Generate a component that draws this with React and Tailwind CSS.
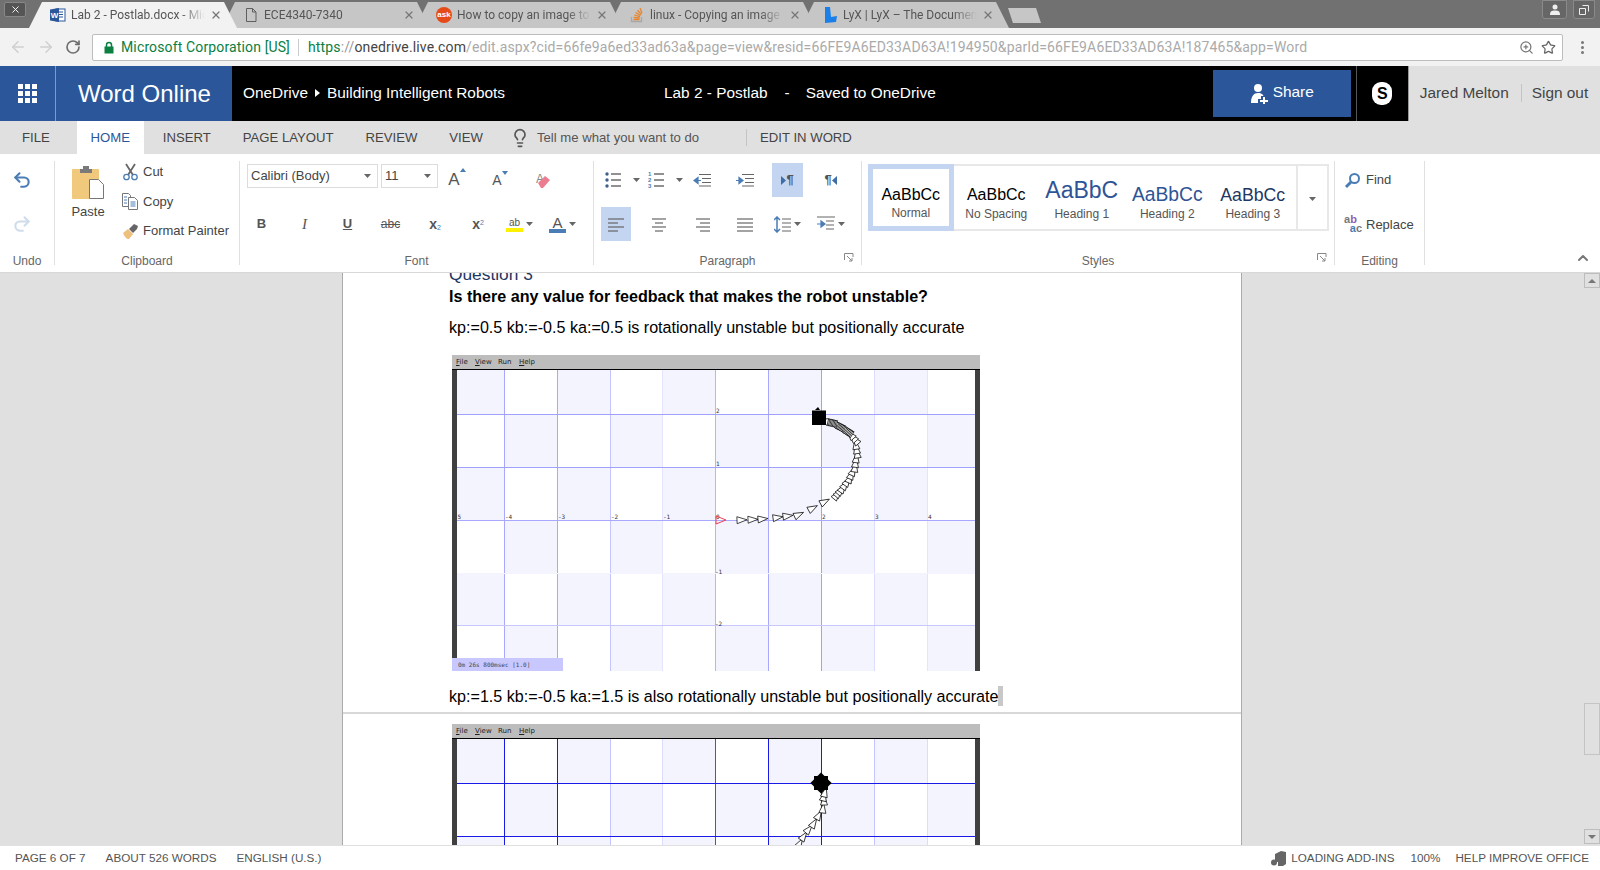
import React from 'react';
import { ArrowLeft, ArrowRight, RotateCw, ZoomIn, Star, Undo2, Redo2, Lightbulb, ChevronUp, X } from 'lucide-react';

const tabs = [
  { title: 'Lab 2 - Postlab.docx - Microsoft Word', icon: 'word', active: true },
  { title: 'ECE4340-7340', icon: 'doc' },
  { title: 'How to copy an image to the clipboard', icon: 'ask' },
  { title: 'linux - Copying an image to clipboard', icon: 'so' },
  { title: 'LyX | LyX – The Document Processor', icon: 'lyx' },
];

const Caret = ({ className = '' }) => (
  <svg width="7" height="4" viewBox="0 0 7 4" className={className}><path d="M0 0h7L3.500 4z" fill="#666" /></svg>
);

const Favicon = ({ type }) => {
  if (type === 'word') return (
    <svg width="16" height="16" viewBox="0 0 16 16">
      <rect x="6" y="2" width="9" height="12" fill="#fff" stroke="#2b579a" />
      <path d="M9 5h4M9 7.500h4M9 10h4" stroke="#2b579a" />
      <path d="M0 2.500 9 1v14l-9-1.500z" fill="#2b579a" />
      <text x="4.500" y="11" textAnchor="middle" fontSize="8" fontWeight="700" fill="#fff" fontFamily="Liberation Sans">W</text>
    </svg>
  );
  if (type === 'doc') return (
    <svg width="16" height="16" viewBox="0 0 16 16" fill="none" stroke="#5f5f5f">
      <path d="M3.500 1.500h6l3.500 3.500v9.500h-9.500zM9.500 1.500v3.500h3.500" />
    </svg>
  );
  if (type === 'ask') return (
    <div className="w-[16px] h-[16px] rounded-full bg-[#e64a19] text-white text-[8px] font-bold leading-[15px] text-center">ask</div>
  );
  if (type === 'so') return (
    <svg width="16" height="16" viewBox="0 0 16 16" fill="none" stroke="#e8842c" strokeWidth="1.300">
      <path d="M2.500 10v4.500h10V10" stroke="#a8a8a8" />
      <path d="M4.500 12.500h6M4.700 10.300l5.900.7M5.300 8l5.700 1.700M6.600 5.500l5 3M8.500 3.200l4 4.300M11 1l2 5" />
    </svg>
  );
  return (
    <svg width="16" height="18" viewBox="0 0 16 18"><path d="M3 1h5l1 10 6-1-1 6-11 1z" fill="#1a7fe8" /></svg>
  );
};

const ChromeTab = ({ tab }) => (
  <div className={`relative w-[208px] h-[26px] -mr-[15px] flex items-center pl-[21px] pr-[15px] [clip-path:polygon(0_100%,13px_0,195px_0,100%_100%)] ${tab.active ? 'bg-[#f2f2f2] z-10' : 'bg-[#c6c6c6]'}`}>
    <div className="w-[16px] flex justify-center shrink-0"><Favicon type={tab.icon} /></div>
    <div className="ml-[5px] flex-1 overflow-hidden whitespace-nowrap text-[12px] text-[#555] [font-family:Roboto,sans-serif] [mask-image:linear-gradient(to_right,black_82%,transparent)]">{tab.title}</div>
    <X size={12} strokeWidth={2.500} className="ml-[5px] shrink-0 text-[#777]" />
  </div>
);

const TabStrip = () => (
  <div className="h-[28px] bg-[#717171] flex items-end">
    <div className="self-start mt-[2px] ml-[4px] w-[22px] h-[15px] bg-[#555] border border-[#888] rounded-[2px] flex items-center justify-center">
      <X size={11} strokeWidth={2} className="text-white" />
    </div>
    <div className="ml-[3px] flex">
      {tabs.map(t => <ChromeTab key={t.title} tab={t} />)}
    </div>
    <div className="ml-[14px] mb-[5px] w-[33px] h-[15px] bg-[#c6c6c6] [clip-path:polygon(0_0,85%_0,100%_100%,15%_100%)]" />
    <div className="ml-auto self-start flex gap-[6px] mr-[5px]">
      <div className="w-[25px] h-[19px] bg-[#666] border border-[#8a8a8a] rounded-b-[3px] flex items-center justify-center">
        <svg width="10" height="11" viewBox="0 0 10 11" fill="#eee"><circle cx="5" cy="3" r="2.500" /><path d="M0 11c0-4 2-4.500 5-4.500s5 .5 5 4.500z" /></svg>
      </div>
      <div className="w-[22px] h-[19px] bg-[#666] border border-[#8a8a8a] rounded-b-[3px] flex items-center justify-center">
        <svg width="10" height="10" viewBox="0 0 10 10" fill="none" stroke="#eee"><path d="M3.500.5h6v6M.5 3.500h6v6h-6z" /></svg>
      </div>
    </div>
  </div>
);

const AddressBar = () => (
  <div className="h-[38px] bg-[#f2f2f2] flex items-center [font-family:Roboto,sans-serif]">
    <div className="w-[92px] flex items-center pl-[9px] gap-[10px] shrink-0">
      <ArrowLeft size={18} className="text-[#cfcfcf]" />
      <ArrowRight size={18} className="text-[#cfcfcf]" />
      <RotateCw size={16} strokeWidth={2.500} className="text-[#6e6e6e]" />
    </div>
    <div className="w-[1471px] h-[27px] bg-white border border-[#bdbdbd] rounded-[2px] flex items-center text-[14px] tracking-[0.14px] whitespace-nowrap">
      <svg width="10" height="13" viewBox="0 0 10 13" className="ml-[11px]">
        <path d="M2.500 6V4a2.500 2.500 0 0 1 5 0v2" fill="none" stroke="#0b8043" strokeWidth="1.500" />
        <rect x="0.500" y="5.500" width="9" height="7" fill="#0b8043" />
      </svg>
      <span className="ml-[7px] text-[#0b8043]">Microsoft Corporation [US]</span>
      <div className="ml-[8px] w-px h-[17px] bg-[#ccc]" />
      <span className="ml-[9px] text-[#0b8043]">https</span>
      <span className="text-[#999]">://</span>
      <span className="text-[#444]">onedrive.live.com</span>
      <span className="text-[#aaa]">/edit.aspx?cid=66fe9a6ed33ad63a&amp;page=view&amp;resid=66FE9A6ED33AD63A!194950&amp;parId=66FE9A6ED33AD63A!187465&amp;app=Word</span>
      <ZoomIn size={15} className="ml-auto text-[#777]" />
      <Star size={15} className="ml-[7px] mr-[6px] text-[#666]" />
    </div>
    <div className="flex-1 flex flex-col items-center gap-[2px] pl-[2px]">
      <div className="w-[3px] h-[3px] rounded-full bg-[#777]" />
      <div className="w-[3px] h-[3px] rounded-full bg-[#777]" />
      <div className="w-[3px] h-[3px] rounded-full bg-[#777]" />
    </div>
  </div>
);

const Waffle = () => (
  <div className="grid grid-cols-3 gap-[2px]">
    {Array.from({ length: 9 }).map((_, i) => <div key={i} className="w-[5px] h-[5px] bg-white" />)}
  </div>
);

const WordHeader = () => (
  <div className="h-[55px] bg-black flex text-white text-[15.400px]">
    <div className="w-[56px] bg-[#2b579a] border-r border-[#7f9ac4] flex items-center justify-center"><Waffle /></div>
    <div className="w-[176px] bg-[#2b579a] pl-[22px] flex items-center text-[24px]">Word Online</div>
    <div className="w-[432px] pl-[11px] pb-[1px] flex items-center">
      <span>OneDrive</span>
      <svg width="5" height="8" viewBox="0 0 5 8" className="mx-[7px]"><path d="M0 0l5 4-5 4z" fill="#fff" /></svg>
      <span>Building Intelligent Robots</span>
    </div>
    <div className="flex items-center whitespace-pre pb-[1px]">
      <span>Lab 2 - Postlab</span>
      <span className="ml-[17px]">-</span>
      <span className="ml-[16px]">Saved to OneDrive</span>
    </div>
    <div className="ml-[277px] my-[4px] w-[138px] bg-[#2b579a] flex items-center justify-center gap-[4px]">
      <svg width="19" height="21" viewBox="0 0 19 21" fill="#fff">
        <circle cx="8" cy="5" r="4" />
        <path d="M1 20c0-7 3-10 7-10s5 2 5.500 3H11v3H8v4z" />
        <path d="M13 14h2v3h3v2h-3v2h-2v-2h-3v-2h3z" />
      </svg>
      <span className="-mt-[3px]">Share</span>
    </div>
    <div className="ml-[5px] w-px bg-[#555]" />
    <div className="w-[51px] flex items-center justify-center">
      <div className="w-[20px] h-[23px] rounded-[9px] bg-white text-black text-[16px] font-bold flex items-center justify-center">S</div>
    </div>
    <div className="flex-1 bg-[#e0e0e0] text-[#444] flex items-center border-l border-[#999] pb-[1px]">
      <span className="ml-[11px]">Jared Melton</span>
      <div className="ml-[12px] w-px h-[18px] bg-[#c4c4c4]" />
      <span className="ml-[10px]">Sign out</span>
    </div>
  </div>
);

const RibbonTabs = () => (
  <div className="h-[33px] bg-[#e0e0e0] flex items-center text-[13.150px] text-[#444]">
    <span className="ml-[22px]">FILE</span>
    <span className="ml-[27px] h-full w-[67px] bg-white text-[#2b579a] flex items-center justify-center">HOME</span>
    <span className="ml-[19px]">INSERT</span>
    <span className="ml-[32px]">PAGE LAYOUT</span>
    <span className="ml-[32px]">REVIEW</span>
    <span className="ml-[32px]">VIEW</span>
    <Lightbulb size={20} className="ml-[27px] text-[#555]" />
    <span className="ml-[7px] text-[#555]">Tell me what you want to do</span>
    <div className="ml-[47px] w-px h-[17px] bg-[#c4c4c4]" />
    <span className="ml-[13px]">EDIT IN WORD</span>
  </div>
);

const Launcher = () => (
  <svg width="10" height="10" viewBox="0 0 10 10" fill="none" stroke="#888" className="absolute right-[7px] bottom-[2px]">
    <path d="M.5 7V.5H9V4M3 3l5 5M8 5v3H5" />
  </svg>
);

const Group = ({ label, w, launcher, children }) => (
  <div className={`relative h-[104px] flex flex-col justify-between border-r border-[#e0e0e0] ${w}`}>
    <div>{children}</div>
    <div className="h-[16px] -mb-[4px] text-center text-[12px] leading-[16px] text-[#666]">{label}</div>
    {launcher && <Launcher />}
  </div>
);

const Scissors = () => (
  <svg width="17" height="18" viewBox="0 0 17 18" fill="none">
    <path d="M4 1l7 11M13 1L6 12" stroke="#666" strokeWidth="1.800" />
    <circle cx="4.500" cy="14" r="2.700" stroke="#4a7db5" strokeWidth="1.300" />
    <circle cx="12.500" cy="14" r="2.700" stroke="#4a7db5" strokeWidth="1.300" />
  </svg>
);

const CopyIcon = () => (
  <svg width="17" height="17" viewBox="0 0 17 17" fill="#fff" stroke="#777">
    <path d="M.5.500h6l2 2v11h-8z" />
    <path d="M6.500 4.500h6l3 3v9h-9z" />
    <path d="M2 4h3M2 7h3M2 10h3M8.500 9h5M8.500 11h5M8.500 13h5" stroke="#4a7db5" />
  </svg>
);

const PainterIcon = () => (
  <svg width="17" height="17" viewBox="0 0 17 17">
    <path d="M1 10l5-4 5 5-4 5c-3 0-4-2-6-6z" fill="#edc07c" />
    <path d="M7 6l5-5 4 2-1 3-4 4z" fill="#666" />
  </svg>
);

const PasteIcon = () => (
  <svg width="32" height="34" viewBox="0 0 32 34">
    <rect x="0" y="4" width="27" height="30" rx="1" fill="#f0c97c" />
    <path d="M8 4h3V1h6v3h3v4H8z" fill="#7a7a7a" />
    <path d="M17.500 14.500h9l5 5v14h-14z" fill="#fff" stroke="#777" />
  </svg>
);

const ClipRow = ({ icon, text }) => (
  <div className="h-[22px] flex items-center text-[13px] text-[#444]">
    <div className="w-[18px] flex justify-center">{icon}</div>
    <span className="ml-[4px]">{text}</span>
  </div>
);

const Cell = ({ children, w = 'w-[43px]', start }) => (
  <div className={`${w} h-full flex items-center shrink-0 ${start ? 'justify-start pl-[11px]' : 'justify-center'}`}>{children}</div>
);

const GrowA = ({ size, up }) => (
  <div className="relative flex text-[#555]">
    <span className={size}>A</span>
    <svg width="6" height="4" viewBox="0 0 6 4" className="mt-[1px]">
      <path d={up ? 'M0 4h6L3 0z' : 'M0 0h6L3 4z'} fill="#4a7db5" />
    </svg>
  </div>
);

const Eraser = () => (
  <svg width="17" height="17" viewBox="0 0 17 17">
    <text x="1" y="11" fontSize="12" fill="#888" fontFamily="Liberation Sans">A</text>
    <path d="M3 11l7-7 5 4-7 8H6z" fill="#ec7d8f" />
  </svg>
);

const FontRow1 = () => (
  <div className="h-[38px] flex items-center pl-[7px] text-[13px] text-[#444]">
    <div className="w-[131px] h-[24px] mb-[8px] border border-[#dcdcdc] flex items-center justify-between pl-[3px] pr-[6px]">
      <span>Calibri (Body)</span><Caret />
    </div>
    <div className="ml-[3px] w-[57px] h-[24px] mb-[8px] border border-[#dcdcdc] flex items-center justify-between pl-[3px] pr-[6px]">
      <span>11</span><Caret />
    </div>
    <div className="ml-[2px] flex h-full gap-[9px] items-center">
      <Cell w="w-[34px]"><GrowA size="text-[17px]" up /></Cell>
      <Cell w="w-[34px]"><GrowA size="text-[14px]" /></Cell>
      <Cell w="w-[34px]"><Eraser /></Cell>
    </div>
  </div>
);

const FontRow2 = () => (
  <div className="h-[38px] mt-[6px] flex text-[#555] text-[13px]">
    <Cell><span className="font-bold">B</span></Cell>
    <Cell><span className="italic [font-family:'Liberation_Serif',serif] text-[15px]">I</span></Cell>
    <Cell><span className="underline font-bold">U</span></Cell>
    <Cell><span className="line-through text-[12px]">abc</span></Cell>
    <Cell><span className="ml-[3px] font-bold text-[14px]">x<sub className="text-[7px] font-normal text-[#4a7db5]">2</sub></span></Cell>
    <Cell><span className="ml-[3px] font-bold text-[14px]">x<sup className="text-[7px] font-normal text-[#4a7db5]">2</sup></span></Cell>
    <Cell>
      <div className="flex items-center gap-[3px]">
        <div className="flex flex-col items-center">
          <span className="text-[10px] leading-[11px]">ab</span>
          <div className="w-[17px] h-[4px] bg-[#fff200]" />
        </div>
        <Caret />
      </div>
    </Cell>
    <Cell>
      <div className="flex items-center gap-[3px]">
        <div className="flex flex-col items-center">
          <span className="text-[15px] leading-[13px]">A</span>
          <div className="w-[17px] h-[4px] bg-[#4a7db5]" />
        </div>
        <Caret />
      </div>
    </Cell>
  </div>
);

const Lines = ({ kind }) => {
  const rows = [3, 7, 11, 15];
  const spec = {
    center: [[1, 15], [4, 12], [1, 15], [4, 12]],
    right: [[2, 16], [6, 16], [2, 16], [6, 16]],
  };
  return (
    <svg width="16" height="16" viewBox="0 0 16 16" stroke="#666" strokeWidth="1.200">
      {rows.map((y, i) => {
        if (kind === 'left') return <path key={y} d={`M0 ${y}h${i % 2 ? 10 : 16}`} />;
        const s = kind === 'justify' ? [0, 16] : spec[kind][i];
        return <path key={y} d={`M${s[0]} ${y}H${s[1]}`} />;
      })}
    </svg>
  );
};

const Bullets = ({ numbered }) => (
  <svg width="16" height="16" viewBox="0 0 16 16">
    {[2, 8, 14].map((y, i) => (
      <g key={y}>
        {numbered
          ? <text x="0" y={y + 2} fontSize="6" fontWeight="700" fill="#4a7db5" fontFamily="Liberation Sans">{i + 1}</text>
          : <circle cx="2" cy={y} r="1.700" fill="#3d5f88" />}
        <path d={`M6 ${y}h10`} stroke="#555" strokeWidth="1.300" />
      </g>
    ))}
  </svg>
);

const IndentIcon = ({ flip }) => (
  <svg width="18" height="14" viewBox="0 0 18 14" stroke="#666" strokeWidth="1.200">
    <path d="M6 1.500h12M9 5.500h9M9 9.500h9M6 13h12" />
    {flip
      ? <path d="M0 7.500h6M3 4.500l4 3-4 3z" stroke="#4a7db5" fill="#4a7db5" />
      : <path d="M8 7.500H2M5 4.500l-4 3 4 3z" stroke="#4a7db5" fill="#4a7db5" />}
  </svg>
);

const DirIcon = ({ rtl }) => (
  <div className="flex items-center text-[13px] text-[#555] font-bold">
    {!rtl && <svg width="5" height="9" viewBox="0 0 5 9"><path d="M0 0l5 4.500L0 9z" fill="#3d6ea5" /></svg>}
    <span>¶</span>
    {rtl && <svg width="5" height="9" viewBox="0 0 5 9"><path d="M5 0L0 4.500 5 9z" fill="#3d6ea5" /></svg>}
  </div>
);

const ParagraphRows = () => (
  <>
    <div className="h-[38px] flex">
      <Cell start><div className="flex items-center gap-[12px]"><Bullets /><Caret /></div></Cell>
      <Cell start><div className="flex items-center gap-[12px]"><Bullets numbered /><Caret /></div></Cell>
      <Cell><IndentIcon /></Cell>
      <Cell><IndentIcon flip /></Cell>
      <Cell><div className="w-[31px] h-[34px] bg-[#c3d5f1] flex items-center justify-center"><DirIcon /></div></Cell>
      <Cell><DirIcon rtl /></Cell>
    </div>
    <div className="h-[38px] mt-[6px] flex">
      <Cell><div className="w-[30px] h-[34px] bg-[#c3d5f1] flex items-center justify-center"><Lines kind="left" /></div></Cell>
      <Cell><Lines kind="center" /></Cell>
      <Cell><Lines kind="right" /></Cell>
      <Cell><Lines kind="justify" /></Cell>
      <Cell>
        <div className="flex items-center gap-[3px]">
          <svg width="17" height="17" viewBox="0 0 17 17" stroke="#666" strokeWidth="1.200">
            <path d="M8 3h9M8 7h9M8 11h9M8 15h9" />
            <path d="M3 1v15M0 4l3-3 3 3M0 13l3 3 3-3" stroke="#4a7db5" fill="none" strokeWidth="1.500" />
          </svg>
          <Caret />
        </div>
      </Cell>
      <Cell>
        <div className="flex items-center gap-[3px]">
          <svg width="18" height="16" viewBox="0 0 18 16" stroke="#666" strokeWidth="1.200">
            <path d="M0 1h18M9 5h8M9 9h8M9 13h8" />
            <path d="M0 8h6M4 5l4 3-4 3z" stroke="#4a7db5" fill="#4a7db5" />
          </svg>
          <Caret />
        </div>
      </Cell>
    </div>
  </>
);

const StyleItem = ({ sample, label, cls, selected }) => (
  <div className={`w-[85.500px] h-full shrink-0 flex flex-col items-center ${selected ? 'border-[5px] border-[#c3d5f1] pt-[14px] -ml-[2px] -my-[2px] !h-[67px]' : 'pt-[17px]'}`}>
    <div className={`h-[24px] flex items-end leading-[24px] ${cls}`}>{sample}</div>
    <div className={`text-[12px] leading-[14px] text-[#555] ${selected ? '-mt-[1px]' : ''}`}>{label}</div>
  </div>
);

const Styles = () => (
  <div className="mt-[3px] ml-[6px] w-[461px] h-[67px] border-2 border-[#e8e8e8] flex">
    <StyleItem selected sample="AaBbCc" label="Normal" cls="text-[16px] text-black" />
    <StyleItem sample="AaBbCc" label="No Spacing" cls="text-[16px] text-black" />
    <StyleItem sample="AaBbC" label="Heading 1" cls="text-[23px] text-[#2f5496] pb-[5px]" />
    <StyleItem sample="AaBbCc" label="Heading 2" cls="text-[19.300px] text-[#2f5496]" />
    <StyleItem sample="AaBbCc" label="Heading 3" cls="text-[17.700px] text-[#1f3763]" />
    <div className="flex-1 border-l-2 border-[#e8e8e8] flex items-center justify-center pt-[2px]"><Caret /></div>
  </div>
);

const Ribbon = () => (
  <div className="h-[119px] bg-white border-b border-[#d8d8d8] pt-[7px] flex">
    <Group label="Undo" w="w-[55px]">
      <div className="w-[44px] h-[38px] flex items-center justify-center"><Undo2 size={20} strokeWidth={2.500} className="text-[#4a7db5]" /></div>
      <div className="w-[44px] h-[38px] mt-[6px] flex items-center justify-center"><Redo2 size={20} strokeWidth={2.500} className="text-[#cfdcec]" /></div>
    </Group>
    <Group label="Clipboard" w="w-[185px]">
      <div className="flex">
        <div className="w-[66px] flex flex-col items-center pt-[4px] text-[13px] text-[#444]">
          <PasteIcon />
          <span className="mt-[3px]">Paste</span>
        </div>
        <div className="flex flex-col gap-[7.500px]">
          <ClipRow icon={<Scissors />} text="Cut" />
          <ClipRow icon={<CopyIcon />} text="Copy" />
          <ClipRow icon={<PainterIcon />} text="Format Painter" />
        </div>
      </div>
    </Group>
    <Group label="Font" w="w-[354px]">
      <FontRow1 />
      <FontRow2 />
    </Group>
    <Group label="Paragraph" w="w-[268px]" launcher>
      <ParagraphRows />
    </Group>
    <Group label="Styles" w="w-[473px]" launcher>
      <Styles />
    </Group>
    <Group label="Editing" w="w-[90px]">
      <div className="pl-[9px] text-[13px] text-[#444]">
        <div className="h-[38px] flex items-center">
          <svg width="17" height="17" viewBox="0 0 17 17" fill="none" stroke="#4a7db5" strokeWidth="2">
            <circle cx="10.500" cy="6.500" r="4.500" /><path d="M7 10l-5 5" strokeWidth="3" />
          </svg>
          <span className="ml-[5px] -mt-[1px]">Find</span>
        </div>
        <div className="h-[38px] mt-[6px] flex items-center">
          <div className="w-[18px] text-[11px] leading-[9px] font-bold">
            <div className="text-[#777]">a<span className="text-[#8e5fb0]">b</span></div>
            <div className="text-right text-[#4a7db5]">a<span className="text-[#777]">c</span></div>
          </div>
          <span className="ml-[4px] mt-[1px]">Replace</span>
        </div>
      </div>
    </Group>
    <div className="flex-1 flex justify-end items-end pr-[9px] pb-[6px]">
      <ChevronUp size={16} strokeWidth={3} className="text-[#777]" />
    </div>
  </div>
);

const colEdges = [0, 47, 100, 153, 205, 258, 311, 364, 417, 470, 518];
const rowEdges = [0, 44, 97, 150, 203, 255, 301];

// grid plot of the robot path; points are in plot coordinates
const Trail = ({ points }) => (
  <g fill="#fff" stroke="#000" strokeWidth="0.700">
    {points.map(([x, y], i) => {
      const next = points[i + 1] || [x + (x - points[i - 1][0]), y + (y - points[i - 1][1])];
      const deg = Math.atan2(next[1] - y, next[0] - x) * 180 / Math.PI;
      return <path key={i} d="M-5-3.500L5 0-5 3.500z" transform={`translate(${x} ${y}) rotate(${deg.toFixed(1)})`} />;
    })}
  </g>
);

const densify = (pts) => {
  const out = [];
  pts.forEach((p, i) => {
    out.push(p);
    const n = i >= 14 ? 7 : i >= 8 ? 3 : 1;
    if (pts[i + 1]) {
      for (let k = 1; k < n; k++) {
        out.push([p[0] + (pts[i + 1][0] - p[0]) * k / n, p[1] + (pts[i + 1][1] - p[1]) * k / n]);
      }
    }
  });
  return out;
};

const path1 = densify([[285, 150], [296, 149.500], [306, 149], [321, 147.500], [331, 146], [342, 144.500], [356, 138], [368, 131.500], [380, 125], [386, 118], [393, 108], [398, 97], [400, 83], [398, 70], [391, 62], [383, 57], [375, 53], [366, 51]]);
const path2 = [[343, 104], [347, 97], [352, 90], [357, 84], [362, 76], [366, 69], [367, 61], [367, 57], [368, 53]];

const gridTheme = {
  one: {
    v: ['#a8a8ff', '#a8a8ff', '#c4c4ff', '#e4e4ff', '#b4b4ff', '#a8a8ff', '#a0a0ff', '#dcdcff', '#e4e4ff'],
    h: ['#a0a0ff', '#a0a0ff', '#a8a8ff', '#f4f4ff', '#c8c8ff'],
  },
  two: {
    v: ['#1a1ae6', '#1a1ae6', '#c4c4ff', '#dcdcff', '#4a4aee', '#1a1ae6', '#1a1ae6', '#c4c4ff', '#dcdcff'],
    h: ['#1a1ae6', '#1a1ae6', '#1a1ae6', '#1a1ae6', '#1a1ae6'],
  },
};

const PlotWindow = ({ theme, trail, head, first }) => {
  const t = gridTheme[theme];
  return (
    <div className="relative w-[528px] h-[316px] shrink-0">
      <div className="h-[15px] bg-[#bdbdbd] border-b border-black flex items-center pl-[4px] text-[7px] text-[#222] [font-family:'DejaVu_Sans',sans-serif]">
        <span className="w-[19px]"><u>F</u>ile</span>
        <span className="w-[23px]"><u>V</u>iew</span>
        <span className="w-[21px]">Run</span>
        <span><u>H</u>elp</span>
      </div>
      <div className="flex h-[301px]">
        <div className="w-[5px] bg-[#404040]" />
        <svg width="518" height="301" viewBox="0 0 518 301" className="block">
          <rect width="518" height="301" fill="#fff" />
          {rowEdges.slice(0, -1).map((y, r) => colEdges.slice(0, -1).map((x, c) => (
            (r + c) % 2 === 0 && <rect key={`${r}-${c}`} x={x} y={y} width={colEdges[c + 1] - x} height={rowEdges[r + 1] - y} fill="#f4f4ff" />
          )))}
          {t.v.map((stroke, i) => <path key={i} d={`M${colEdges[i + 1] + 0.5} 0V301`} stroke={stroke} />)}
          {t.h.map((stroke, i) => <path key={i} d={`M0 ${rowEdges[i + 1] + 0.5}H518`} stroke={stroke} />)}
          {first && (
            <g fontSize="6" fill="#333" fontFamily="DejaVu Sans Mono">
              {['-5', '-4', '-3', '-2', '-1', '0', '', '2', '3', '4'].map((l, i) => <text key={i} x={colEdges[i] + (i ? 1 : -3)} y="149">{l}</text>)}
              <text x="259" y="43">2</text>
              <text x="259" y="96">1</text>
              <text x="258" y="204">-1</text>
              <text x="258" y="256">-2</text>
              <path d="M259 146v8l10-4z" fill="none" stroke="#f04050" />
            </g>
          )}
          <Trail points={trail} />
          {head}
        </svg>
        <div className="w-[5px] bg-[#404040]" />
      </div>
      {first && (
        <div className="absolute left-0 bottom-0 w-[111px] h-[13px] bg-[#c8c8ff] pl-[6px] text-[6px] leading-[13px] text-[#444] [font-family:'DejaVu_Sans_Mono',monospace]">0m 26s 800msec [1.0]</div>
      )}
    </div>
  );
};

const Document = () => (
  <div className="h-[572px] bg-[#e0e0e0] flex overflow-hidden">
    <div className="ml-[342px] w-[900px] h-full overflow-hidden bg-white border-x border-[#ababab] text-black text-[16.130px]">
      <div className="pl-[106px] -mt-[11px]">
        <div className="h-[24px] text-[17.330px] leading-[24px] text-[#1f3763]">Question 3</div>
        <div className="h-[20px] font-bold leading-[20px]">Is there any value for feedback that makes the robot unstable?</div>
        <div className="h-[20px] mt-[11px] leading-[20px]">kp:=0.5 kb:=-0.5 ka:=0.5 is rotationally unstable but positionally accurate</div>
        <div className="mt-[18px] ml-[3px]">
          <PlotWindow theme="one" first trail={path1} head={(
            <g>
              <rect x="355" y="40.500" width="14" height="14.500" fill="#000" />
              <path d="M358 40l3-3 2 3z" fill="#000" />
            </g>
          )} />
        </div>
        <div className="h-[20px] mt-[15px] leading-[20px] flex">
          <span>kp:=1.5 kb:=-0.5 ka:=1.5 is also rotationally unstable but positionally accurate</span>
          <span className="w-[5px] bg-[#c8c8c8]" />
        </div>
      </div>
      <div className="h-[2px] mt-[6px] bg-[#d8d8d8]" />
      <div className="pl-[109px] mt-[10px]">
        <PlotWindow theme="two" trail={path2} head={(
          <g fill="#000">
            <rect x="356.500" y="36.500" width="15" height="15" transform="rotate(45 364 44)" />
            <rect x="357" y="37" width="14" height="14" />
          </g>
        )} />
      </div>
    </div>
    <div className="ml-auto w-[16px] h-full flex flex-col justify-between">
      <div>
        <div className="h-[15px] border border-[#bdbdbd] flex items-center justify-center">
          <svg width="8" height="4" viewBox="0 0 8 4"><path d="M0 4h8L4 0z" fill="#777" /></svg>
        </div>
        <div className="mt-[415px] h-[52px] border border-[#c4c4c4]" />
      </div>
      <div className="h-[15px] mb-[1px] border border-[#bdbdbd] flex items-center justify-center">
        <svg width="8" height="4" viewBox="0 0 8 4"><path d="M0 0h8L4 4z" fill="#777" /></svg>
      </div>
    </div>
  </div>
);

const StatusBar = () => (
  <div className="h-[25px] bg-white border-t border-[#e0e0e0] flex items-center text-[11.700px] text-[#555]">
    <span className="ml-[15px]">PAGE 6 OF 7</span>
    <span className="ml-[20px]">ABOUT 526 WORDS</span>
    <span className="ml-[20px]">ENGLISH (U.S.)</span>
    <svg width="15" height="15" viewBox="0 0 15 15" className="ml-auto" fill="#666">
      <circle cx="3" cy="11.500" r="3" />
      <path d="M4 3l6-3 5 1v12l-3 2H7v-4H4z" />
    </svg>
    <span className="ml-[5px]">LOADING ADD-INS</span>
    <span className="ml-[16px]">100%</span>
    <span className="ml-[15px] mr-[11px]">HELP IMPROVE OFFICE</span>
  </div>
);

export default function App() {
  return (
    <div className="w-[1600px] h-[870px] overflow-hidden bg-white [font-family:'Liberation_Sans',Arial,sans-serif]">
      <TabStrip />
      <AddressBar />
      <WordHeader />
      <RibbonTabs />
      <Ribbon />
      <Document />
      <StatusBar />
    </div>
  );
}
